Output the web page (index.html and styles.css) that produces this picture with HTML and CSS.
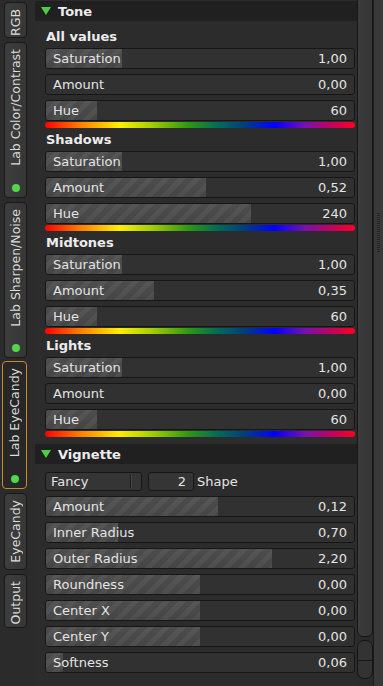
FILE: index.html
```html
<!DOCTYPE html>
<html lang="en">
<head>
    <meta charset="UTF-8">
    <title>Lab EyeCandy</title>
    <link rel="stylesheet" href="styles.css">
</head>
<body>
<div class="tabs">
    <div class="tab" style="height: 36px"><span>RGB</span></div>
    <div class="tab" style="height: 156px"><span>Lab Color/Contrast</span><i class="dot"></i></div>
    <div class="tab" style="height: 156px"><span>Lab Sharpen/Noise</span><i class="dot"></i></div>
    <div class="tab selected" style="height: 128px"><span>Lab EyeCandy</span><i class="dot"></i></div>
    <div class="tab" style="height: 77px"><span>EyeCandy</span></div>
    <div class="tab" style="height: 54px"><span>Output</span></div>
</div>

<div class="panel">
    <div class="expander"><i class="arrow"></i>Tone</div>

    <div class="group first">All values</div>
    <div class="slider"><div class="fill" style="width: 24.6%"></div><span>Saturation</span><b>1,00</b></div>
    <div class="slider"><div class="fill" style="width: 0%"></div><span>Amount</span><b>0,00</b></div>
    <div class="slider"><div class="fill" style="width: 16.6%"></div><span>Hue</span><b>60</b></div>
    <div class="hue_bar"></div>

    <div class="group">Shadows</div>
    <div class="slider"><div class="fill" style="width: 24.6%"></div><span>Saturation</span><b>1,00</b></div>
    <div class="slider"><div class="fill" style="width: 52%"></div><span>Amount</span><b>0,52</b></div>
    <div class="slider"><div class="fill" style="width: 66.6%"></div><span>Hue</span><b>240</b></div>
    <div class="hue_bar"></div>

    <div class="group">Midtones</div>
    <div class="slider"><div class="fill" style="width: 24.6%"></div><span>Saturation</span><b>1,00</b></div>
    <div class="slider"><div class="fill" style="width: 35%"></div><span>Amount</span><b>0,35</b></div>
    <div class="slider"><div class="fill" style="width: 16.6%"></div><span>Hue</span><b>60</b></div>
    <div class="hue_bar"></div>

    <div class="group">Lights</div>
    <div class="slider"><div class="fill" style="width: 24.6%"></div><span>Saturation</span><b>1,00</b></div>
    <div class="slider"><div class="fill" style="width: 0%"></div><span>Amount</span><b>0,00</b></div>
    <div class="slider"><div class="fill" style="width: 16.6%"></div><span>Hue</span><b>60</b></div>
    <div class="hue_bar"></div>

    <div class="expander second"><i class="arrow"></i>Vignette</div>

    <div class="combo_row">
        <div class="combo">Fancy<i class="combo_sep"></i></div>
        <div class="spin">2</div>
        <span class="spin_label">Shape</span>
    </div>
    <div class="slider"><div class="fill" style="width: 56%"></div><span>Amount</span><b>0,12</b></div>
    <div class="slider"><div class="fill" style="width: 23.3%"></div><span>Inner Radius</span><b>0,70</b></div>
    <div class="slider"><div class="fill" style="width: 73.3%"></div><span>Outer Radius</span><b>2,20</b></div>
    <div class="slider"><div class="fill" style="width: 50%"></div><span>Roundness</span><b>0,00</b></div>
    <div class="slider"><div class="fill" style="width: 50%"></div><span>Center X</span><b>0,00</b></div>
    <div class="slider"><div class="fill" style="width: 50%"></div><span>Center Y</span><b>0,00</b></div>
    <div class="slider"><div class="fill" style="width: 5.5%"></div><span>Softness</span><b>0,06</b></div>
</div>

<div class="scrollbar">
    <div class="thumb"></div>
    <div class="step up"></div>
    <div class="step down"></div>
</div>

<div class="pane_grip"><div class="grip_dots"></div></div>
</body>
</html>
```

FILE: styles.css
```css
html, body {
  margin: 0;
  height: 686px;
  overflow: hidden;
}

body {
  display: flex;
  background: #2b2b2b;
  color: #e4e4e4;
  font-family: "DejaVu Sans", sans-serif;
  font-size: 13px;
}

/* left notebook tabs */
.tabs {
  width: 30px;
  flex: none;
  display: flex;
  flex-direction: column;
  gap: 4px;
  padding-top: 2px;
  box-sizing: border-box;
}

.tab {
  box-sizing: border-box;
  width: 23px;
  margin-left: 4px;
  display: flex;
  flex-direction: column;
  align-items: center;
  padding-top: 6px;
  background: linear-gradient(to right, #3e3e3e, #363636);
  border: 1px solid #181818;
  border-radius: 4px;
  font-size: 12.5px;
  color: #dcdcdc;
}

.tab span {
  writing-mode: vertical-rl;
  transform: rotate(180deg);
  line-height: 21px;
  white-space: nowrap;
}

.tab.selected {
  width: 25px;
  margin-left: 2px;
  background: #272727;
  border-color: #c98a2c;
  margin-top: -1px;
}

.dot {
  width: 8px;
  height: 8px;
  border-radius: 50%;
  background: #52d64a;
  margin-top: auto;
  margin-bottom: 5px;
}

/* main panel */
.panel {
  width: 323px;
  flex: none;
  margin-left: 4px;
  background: #2c2c2c;
}

.expander {
  height: 20px;
  margin: 1px 0 0 1px;
  background: #202020;
  display: flex;
  align-items: center;
  font-weight: bold;
  font-size: 13px;
  color: #ececec;
}

.expander.second {
  margin-top: 7px;
}

.arrow {
  width: 0;
  height: 0;
  margin: 0 7px 0 6px;
  border-left: 5px solid transparent;
  border-right: 5px solid transparent;
  border-top: 8px solid #4dce46;
}

.group {
  height: 23px;
  line-height: 23px;
  padding-left: 12px;
  font-weight: bold;
  font-size: 13px;
  color: #ececec;
}

.group.first {
  margin-top: 4px;
}

.slider {
  position: relative;
  box-sizing: border-box;
  height: 21px;
  width: 310px;
  margin: 0 0 5px 11px;
  background: #313131;
  border: 1px solid #161616;
  border-radius: 3px;
  display: flex;
  align-items: center;
  justify-content: space-between;
  padding: 0 7px 0 7px;
  overflow: hidden;
}

.slider .fill {
  position: absolute;
  left: 0;
  top: 0;
  bottom: 0;
  background:
    repeating-linear-gradient(135deg, rgba(255, 255, 255, 0) 0 6px, rgba(255, 255, 255, 0.05) 6px 11px),
    linear-gradient(#4d4d4d, #454545);
}

.slider span, .slider b {
  position: relative;
  font-weight: normal;
}

.hue_bar {
  height: 6px;
  width: 310px;
  margin: -4px 0 0 11px;
  border-radius: 3px;
  background: linear-gradient(to right, #ff0000, #ff7a00 11%, #ffee00 24%, #a8d000 34%, #2f9a10 46%, #006a5a 56%, #00407c 64%, #0000ff 74%, #7a10b0 84%, #c8005a 93%, #ff0020);
}

/* vignette combo + spin */
.combo_row {
  display: flex;
  align-items: center;
  margin: 8px 0 5px 11px;
  height: 19px;
}

.combo, .spin {
  box-sizing: border-box;
  height: 19px;
  background: #353535;
  border: 1px solid #161616;
  border-radius: 3px;
  display: flex;
  align-items: center;
}

.combo {
  width: 97px;
  padding-left: 5px;
  position: relative;
}

.combo_sep {
  position: absolute;
  right: 9px;
  top: 2px;
  bottom: 2px;
  width: 1px;
  background: #1c1c1c;
  border-right: 1px solid #484848;
}

.spin {
  width: 46px;
  margin-left: 6px;
  justify-content: flex-end;
  padding-right: 7px;
}

.spin_label {
  margin-left: 3px;
}

/* scrollbar */
.scrollbar {
  width: 16px;
  flex: none;
  display: flex;
  flex-direction: column;
  background: #2b2b2b;
}

.thumb {
  box-sizing: border-box;
  height: 641px;
  margin-top: -4px;
  background: linear-gradient(to right, #3c3c3c, #353535);
  border: 1px solid #161616;
  border-radius: 0 0 6px 6px;
}

.step {
  box-sizing: border-box;
  height: 19px;
  background: #333;
  border: 1px solid #161616;
}

.step.up {
  margin-top: 3px;
  height: 21px;
  border-radius: 7px 7px 0 0;
}

.step.down {
  height: 18px;
  border-top: none;
  border-radius: 0 0 7px 7px;
}

.pane_grip {
  flex: 1;
  background: #393939;
  border-left: 1px solid #1a1a1a;
  display: flex;
  justify-content: center;
}

.grip_dots {
  width: 3px;
  height: 40px;
  margin-top: 213px;
  background: repeating-linear-gradient(#232323 0 1px, transparent 1px 2px);
}
```
